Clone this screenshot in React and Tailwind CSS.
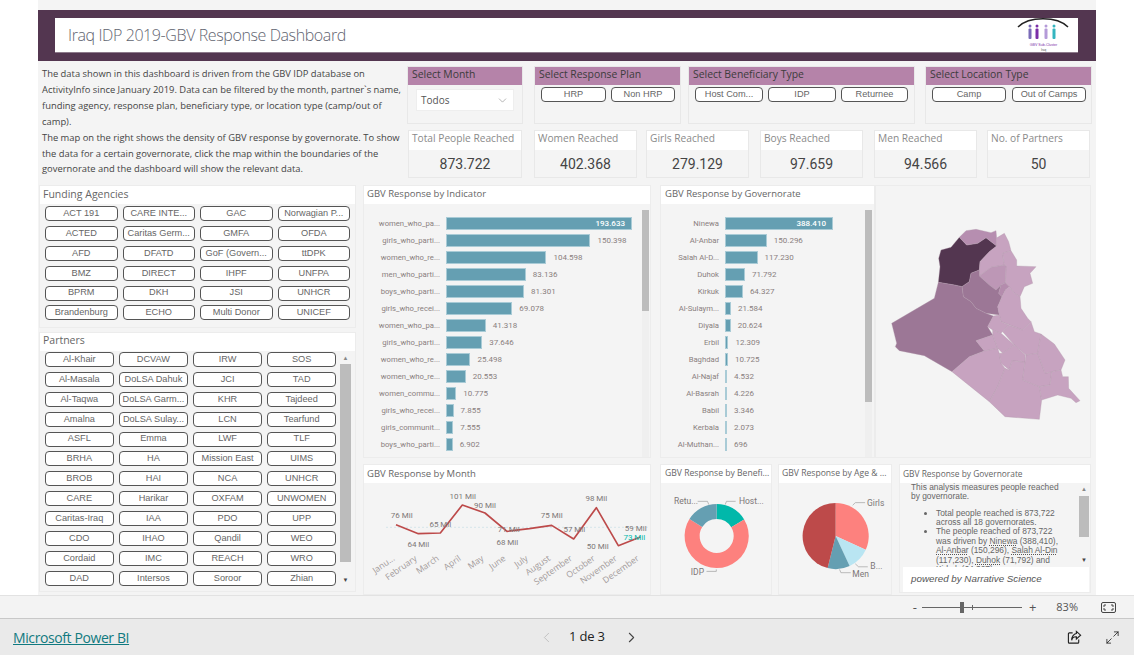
import React from 'react'
import { ChevronDown, ChevronLeft, ChevronRight, Maximize2 } from 'lucide-react'

const funding = [
  ['ACT 191', 'CARE INTE...', 'GAC', 'Norwagian P...'],
  ['ACTED', 'Caritas Germ...', 'GMFA', 'OFDA'],
  ['AFD', 'DFATD', 'GoF (Govern...', 'ttDPK'],
  ['BMZ', 'DIRECT', 'IHPF', 'UNFPA'],
  ['BPRM', 'DKH', 'JSI', 'UNHCR'],
  ['Brandenburg', 'ECHO', 'Multi Donor', 'UNICEF'],
]

const partners = [
  ['Al-Khair', 'DCVAW', 'IRW', 'SOS'],
  ['Al-Masala', 'DoLSA Dahuk', 'JCI', 'TAD'],
  ['Al-Taqwa', 'DoLSA Garm...', 'KHR', 'Tajdeed'],
  ['Amalna', 'DoLSA Sulay...', 'LCN', 'Tearfund'],
  ['ASFL', 'Emma', 'LWF', 'TLF'],
  ['BRHA', 'HA', 'Mission East', 'UIMS'],
  ['BROB', 'HAI', 'NCA', 'UNHCR'],
  ['CARE', 'Harikar', 'OXFAM', 'UNWOMEN'],
  ['Caritas-Iraq', 'IAA', 'PDO', 'UPP'],
  ['CDO', 'IHAO', 'Qandil', 'WEO'],
  ['Cordaid', 'IMC', 'REACH', 'WRO'],
  ['DAD', 'Intersos', 'Soroor', 'Zhian'],
]

const indicators = [
  ['women_who_pa...', 193633], ['girls_who_parti...', 150398], ['women_who_re...', 104598],
  ['men_who_parti...', 83136], ['boys_who_parti...', 81301], ['girls_who_recei...', 69078],
  ['women_who_pa...', 41318], ['girls_who_parti...', 37646], ['women_who_re...', 25498],
  ['women_who_re...', 20553], ['women_commu...', 10775], ['girls_who_recei...', 7855],
  ['girls_communit...', 7555], ['boys_who_parti...', 6902],
]

const governorates = [
  ['Ninewa', 388410], ['Al-Anbar', 150296], ['Salah Al-D...', 117230], ['Duhok', 71792],
  ['Kirkuk', 64327], ['Al-Sulaym...', 21584], ['Diyala', 20624], ['Erbil', 12309],
  ['Baghdad', 10725], ['Al-Najaf', 4532], ['Al-Basrah', 4226], ['Babil', 3346],
  ['Kerbala', 2073], ['Al-Muthan...', 696],
]

const kpis = [
  ['Total People Reached', '873.722', 'w-[114px]', ''],
  ['Women Reached', '402.368', 'w-[103px]', 'ml-[12px]'],
  ['Girls Reached', '279.129', 'w-[103px]', 'ml-[9px]'],
  ['Boys Reached', '97.659', 'w-[103px]', 'ml-[11px]'],
  ['Men Reached', '94.566', 'w-[103px]', 'ml-[11px]'],
  ['No. of Partners', '50', 'w-[103px]', 'ml-[10px]'],
]

const mapRegions = [
  ['#533650', '250,142 272,165 305,160 330,143 362,168 340,185 312,215 310,240 285,250 280,275 258,290 235,285 187,277 192,230 188,205 195,180 225,172'],
  ['#b68eb0', '250,142 270,122 300,118 345,128 360,122 362,145 362,168 330,143 305,160 272,165'],
  ['#c7a3c0', '362,168 360,145 385,130 398,155 405,182 380,190 385,225 345,232 310,258 310,240 312,215 340,185'],
  ['#c7a3c0', '380,190 405,182 422,210 422,228 480,230 462,250 470,280 445,290 432,320 415,310 400,290 388,278 390,228 385,225'],
  ['#bd97b6', '310,258 345,232 385,225 390,228 388,278 375,285 360,300 340,285'],
  ['#9c7796', '285,250 310,240 310,258 340,285 360,300 375,285 368,310 378,320 365,350 370,375 330,370 300,355 285,335 262,320 258,290 280,275'],
  ['#b48cad', '375,285 388,278 400,290 388,300 378,320 368,310'],
  ['#c7a3c0', '388,300 400,290 415,310 432,320 435,355 455,385 465,395 440,420 400,405 375,395 370,375 365,350 378,320'],
  ['#9c7796', '187,277 235,285 258,290 262,320 285,335 300,355 330,370 352,378 335,410 350,435 300,452 325,483 280,500 228,545 145,497 70,482 58,470 62,460 47,400 175,325'],
  ['#c7a3c0', '352,378 370,375 375,395 398,405 375,430 350,420 335,410'],
  ['#c7a3c0', '398,405 440,420 465,395 475,425 495,432 485,490 450,495 415,465 380,425'],
  ['#c7a3c0', '300,452 350,435 365,475 325,483'],
  ['#c7a3c0', '350,420 375,430 415,465 380,490 365,475 350,435'],
  ['#c7a3c0', '228,545 280,500 325,483 365,475 370,490 375,520 387,535 365,590 340,635'],
  ['#c7a3c0', '370,490 380,490 415,465 448,495 447,517 408,512 400,540 375,520'],
  ['#c7a3c0', '340,635 365,590 387,535 400,540 408,512 447,517 440,570 490,590 497,630 490,688 387,680'],
  ['#c7a3c0', '447,517 450,495 485,490 507,550 527,545 522,585 490,590 440,570'],
  ['#c7a3c0', '485,490 495,432 535,462 567,510 555,540 527,545 507,550'],
  ['#c7a3c0', '527,545 555,540 560,560 577,560 578,595 612,632 600,638 585,625 545,615 497,630 490,590 522,585'],
]

const months = ['Janu...', 'February', 'March', 'April', 'May', 'June', 'July', 'August', 'September', 'October', 'November', 'December']
const linePts = [[105, 195], [172, 222], [238, 220], [304, 136], [372, 160], [438, 215], [505, 207], [572, 197], [638, 238], [706, 144], [772, 258], [838, 232]]
const lineLabels = [
  ['76 Mil', 122, 176], ['64 Mil', 172, 263], ['65 Mil', 238, 201], ['101 Mil', 305, 117], ['90 Mil', 372, 144],
  ['71 Mil', 443, 218], ['68 Mil', 439, 255], ['75 Mil', 572, 176], ['57 Mil', 640, 218], ['98 Mil', 706, 125],
  ['50 Mil', 710, 267], ['59 Mil', 824, 215],
]

const fmt = (n) => n.toLocaleString('de-DE')

// start and end in degrees clockwise from the top
const arc = (cx, cy, r, a0, a1, inner = 0) => {
  const pt = (rad, a) => {
    const t = ((a - 90) * Math.PI) / 180
    return `${(cx + rad * Math.cos(t)).toFixed(1)} ${(cy + rad * Math.sin(t)).toFixed(1)}`
  }
  const large = a1 - a0 > 180 ? 1 : 0
  if (!inner) return `M${cx} ${cy} L${pt(r, a0)} A${r} ${r} 0 ${large} 1 ${pt(r, a1)} Z`
  return `M${pt(r, a0)} A${r} ${r} 0 ${large} 1 ${pt(r, a1)} L${pt(inner, a1)} A${inner} ${inner} 0 ${large} 0 ${pt(inner, a0)} Z`
}

const Chiclet = ({ label, className = '' }) => (
  <div className={`h-[15px] flex items-center justify-center bg-white border border-[#555] rounded-[4px] text-[9.2px] leading-none text-[#666] font-['Liberation_Sans',sans-serif] whitespace-nowrap overflow-hidden ${className}`}>
    {label}
  </div>
)

const Title = ({ children, className = '' }) => (
  <div className={`bg-white text-[#666] font-['Open_Sans',sans-serif] whitespace-nowrap overflow-hidden ${className}`}>{children}</div>
)

const Slicer = ({ title, width, className = '', children }) => (
  <div className={`h-[58px] border border-[#e8e8e8] ${width} ${className}`}>
    <div className="h-[18px] bg-[#b583a9] pl-[4px] text-[10.4px] leading-[15px] text-[#3c3c3c] font-['Open_Sans',sans-serif] whitespace-nowrap">{title}</div>
    {children}
  </div>
)

const BarChart = ({ rows, max, maxWidth, labelWidth, scrollHeight, scrollMargin }) => (
  <div className="flex flex-1 min-h-0 pt-[6px]">
    <div className="flex-1 pt-[5px]">
      {rows.map(([label, value], i) => {
        const w = Math.max((value * maxWidth) / max, 1.5)
        return (
          <div key={i} className="flex items-center h-[17px] font-['Roboto',sans-serif] text-[8px] text-[#8a8080]">
            <div className={`text-right pr-[6px] whitespace-nowrap text-[7.7px] ${labelWidth}`}>{label}</div>
            <div className="h-[13px] bg-[#659fb2] border border-[#a9cbd6] flex items-center justify-end" style={{ width: w }}>
              {i === 0 && <span className="pr-[6px] text-white font-medium">{fmt(value)}</span>}
            </div>
            {i > 0 && <span className="pl-[7px]">{fmt(value)}</span>}
          </div>
        )
      })}
    </div>
    <div className={`w-[7px] bg-[#efefef] ${scrollMargin}`}>
      <div className={`bg-[#bcbcbc] ${scrollHeight}`} />
    </div>
  </div>
)

const IraqMap = () => (
  <svg viewBox="0 0 675 801" className="w-[225px] h-[267px] block">
    {mapRegions.map(([fill, points], i) => (
      <polygon key={i} points={points} fill={fill} stroke="#b097aa" strokeWidth="1" strokeLinejoin="round" />
    ))}
  </svg>
)

const LineChart = () => (
  <svg viewBox="9 70 864 336" className="w-[288px] h-[112px] block">
    <line x1="75" y1="203" x2="860" y2="203" stroke="#dbe8ec" strokeWidth="4" strokeDasharray="6 6" />
    <polyline points={linePts.map((p) => p.join(',')).join(' ')} fill="none" stroke="#bd4a4a" strokeWidth="5" strokeLinejoin="round" />
    {lineLabels.map(([t, x, y]) => (
      <text key={t + x} x={x} y={y} textAnchor="middle" fontSize="24" fill="#7d7777" className="font-['Roboto',sans-serif]">{t}</text>
    ))}
    <text x="820" y="242" textAnchor="middle" fontSize="24" fill="#01b8aa" className="font-['Roboto',sans-serif]">73 Mil</text>
    {months.map((m, i) => (
      <text key={m} x={linePts[i][0] - 2} y="300" textAnchor="end" fontSize="26" fill="#a29a9a" transform={`rotate(-35 ${linePts[i][0] - 2} 300)`} className="font-['Open_Sans',sans-serif]">{m}</text>
    ))}
  </svg>
)

const Donut = () => (
  <svg viewBox="16 68 336 336" className="w-[110px] h-[110px] block">
    <path d={arc(186, 230, 98, 0, 59, 52)} fill="#01b8aa" />
    <path d={arc(186, 230, 98, 59, 302, 52)} fill="#fd817e" />
    <path d={arc(186, 230, 98, 302, 360, 52)} fill="#659fb2" />
    <path d="M128 124 H158 L162 134 M212 134 L216 124 H244 M155 338 H185 V332" fill="none" stroke="#999" strokeWidth="2" />
    <g fontSize="26" fill="#7d7777" className="font-['Roboto',sans-serif]">
      <text x="56" y="132">Retu...</text>
      <text x="254" y="132">Host...</text>
      <text x="107" y="348">IDP</text>
    </g>
  </svg>
)

const Pie = () => (
  <svg viewBox="367 68 342 336" className="w-[112px] h-[110px] block">
    <path d={arc(540, 230, 101, 0, 114.5)} fill="#fd817e" />
    <path d={arc(540, 230, 101, 114.5, 155)} fill="#b9e5f2" />
    <path d={arc(540, 230, 101, 155, 194)} fill="#659fb2" />
    <path d={arc(540, 230, 101, 194, 360)} fill="#bd4a4a" />
    <path d="M592 136 L600 128 H630 M600 315 L610 324 H638 M552 332 L556 342 H586" fill="none" stroke="#999" strokeWidth="2" />
    <g fontSize="26" fill="#7d7777" className="font-['Roboto',sans-serif]">
      <text x="636" y="138">Girls</text>
      <text x="646" y="332">B...</text>
      <text x="591" y="354">Men</text>
    </g>
  </svg>
)

const Dotted = ({ children }) => <span className="underline decoration-dotted decoration-[#555]">{children}</span>

const Logo = () => (
  <svg viewBox="0 0 60 34" className="w-[60px] h-[34px] block">
    <path d="M5 9 C16 -2 44 -2 55 9" fill="none" stroke="#222" strokeWidth="1.5" />
    {[[17, '#7a6bb8'], [24, '#7b2fa8'], [33, '#b49ad8'], [41, '#35b5c0']].map(([x, c]) => (
      <g key={x} fill={c}>
        <circle cx={x} cy="8" r="1.5" />
        <rect x={x - 1.5} y="10.5" width="3" height="10.5" rx="1" />
      </g>
    ))}
    <text x="30.5" y="28" textAnchor="middle" fontSize="3.6" fill="#7b2fa8" className="font-['Liberation_Sans',sans-serif]">GBV Sub-Cluster</text>
    <text x="30.5" y="33" textAnchor="middle" fontSize="3" fill="#555" className="font-['Liberation_Sans',sans-serif]">Iraq</text>
  </svg>
)

const App = () => {
  return (
    <div className="w-[1134px] h-[655px] bg-white flex flex-col overflow-hidden">
      {/* Report canvas */}
      <div className="h-[595px] ml-[38px] w-[1058px] bg-[#f4f4f4] pt-[10px]">
        <div className="h-[51px] bg-[#533650] pl-[17px] pt-[8px]">
          <div className="w-[1023px] h-[35px] bg-white flex items-center justify-between pl-[13px] pr-[5px] border-b border-[#8d7a8b]">
            <span className="text-[16px] text-[#5f6470] font-light font-['Open_Sans',sans-serif] tracking-[-0.4px]">Iraq IDP 2019-GBV Response Dashboard</span>
            <Logo />
          </div>
        </div>

        {/* Intro text, slicers and KPI cards */}
        <div className="flex mt-[5px] h-[112px]">
          <div className="w-[369px] pl-[4px] pt-[0px] text-[9.4px] leading-[15.9px] text-[#444] font-['Open_Sans',sans-serif]">
            <p className="whitespace-nowrap">The data shown in this dashboard is driven from the GBV IDP database on</p>
            <p className="whitespace-nowrap">ActivityInfo since January 2019. Data can be filtered by the month, partner`s name,</p>
            <p className="whitespace-nowrap">funding agency, response plan, beneficiary type, or location type (camp/out of</p>
            <p>camp).</p>
            <p className="whitespace-nowrap">The map on the right shows the density of GBV response by governorate. To show</p>
            <p className="whitespace-nowrap">the data for a certain governorate, click the map within the boundaries of the</p>
            <p className="whitespace-nowrap">governorate and the dashboard will show the relevant data.</p>
          </div>
          <div className="flex-1">
            <div className="flex">
              <Slicer title="Select Month" width="w-[116px]">
                <div className="mx-[8px] mt-[4px] h-[22px] bg-white border border-[#eee] flex items-center justify-between px-[4px] text-[10px] text-[#555] font-['Open_Sans',sans-serif]">
                  <span>Todos</span>
                  <ChevronDown size={13} strokeWidth={1} className="text-[#777]" />
                </div>
              </Slicer>
              <Slicer title="Select Response Plan" width="w-[147px]" className="ml-[11px]">
                <div className="flex gap-[5px] pl-[6px] mt-[2px]">
                  <Chiclet label="HRP" className="w-[65px]" />
                  <Chiclet label="Non HRP" className="w-[64px]" />
                </div>
              </Slicer>
              <Slicer title="Select Beneficiary Type" width="w-[227px]" className="ml-[7px]">
                <div className="flex gap-[5px] pl-[6px] mt-[2px]">
                  <Chiclet label="Host Com..." className="w-[68px]" />
                  <Chiclet label="IDP" className="w-[68px]" />
                  <Chiclet label="Returnee" className="w-[67px]" />
                </div>
              </Slicer>
              <Slicer title="Select Location Type" width="w-[167px]" className="ml-[10px]">
                <div className="flex gap-[6px] pl-[6px] mt-[2px]">
                  <Chiclet label="Camp" className="w-[74px]" />
                  <Chiclet label="Out of Camps" className="w-[74px]" />
                </div>
              </Slicer>
            </div>
            <div className="flex mt-[6px] pl-[1px]">
              {kpis.map(([title, value, w, ml]) => (
                <div key={title} className={`h-[48px] border border-[#e8e8e8] ${w} ${ml}`}>
                  <Title className="h-[19px] pl-[3px] text-[10.2px] leading-[15px] !text-[#8a8a8a]">{title}</Title>
                  <div className="text-center text-[14px] leading-[28px] text-[#444] font-['Roboto',sans-serif]">{value}</div>
                </div>
              ))}
            </div>
          </div>
        </div>

        {/* Filters and charts */}
        <div className="flex mt-[7px] pl-[1px]">
          <div className="w-[317px]">
            <div className="h-[143px] border border-[#ececec]">
              <Title className="h-[18px] pl-[3px] text-[10.5px] leading-[16px]">Funding Agencies</Title>
              <div className="grid grid-cols-4 gap-x-[5px] gap-y-[4.9px] pl-[5px] pr-[5px] pt-[2px]">
                {funding.flat().map((f, i) => <Chiclet key={i} label={f} />)}
              </div>
            </div>
            <div className="h-[260px] mt-[4px] border border-[#ececec] flex flex-col">
              <Title className="h-[18px] pl-[3px] text-[10.5px] leading-[14px]">Partners</Title>
              <div className="flex flex-1 pt-[1px]">
                <div className="w-[296px] grid grid-cols-4 gap-x-[5.5px] gap-y-[4.9px] pl-[5px] content-start">
                  {partners.flat().map((p, i) => <Chiclet key={i} label={p} />)}
                </div>
                <div className="ml-[4px] w-[11px] flex flex-col text-[#888]">
                  <div className="h-[12px] text-[6px] leading-[12px] text-center">▲</div>
                  <div className="h-[198px] bg-[#bcbcbc]" />
                  <div className="mt-auto mb-[5px] h-[12px] text-[6px] leading-[12px] text-center text-[#444]">▼</div>
                </div>
              </div>
            </div>
          </div>

          <div className="ml-[7px] w-[728px]">
            <div className="flex h-[273px]">
              <div className="w-[288px] border border-[#ececec] flex flex-col">
                <Title className="h-[18px] pl-[3px] text-[9.5px] leading-[16px]">GBV Response by Indicator</Title>
                <BarChart rows={indicators} max={193633} maxWidth={186} labelWidth="w-[82px]" scrollHeight="h-[101px]" scrollMargin="mr-[1px]" />
              </div>
              <div className="w-[215px] ml-[9px] border border-[#ececec] flex flex-col">
                <Title className="h-[18px] pl-[4px] text-[9.5px] leading-[16px] w-[213px]">GBV Response by Governorate</Title>
                <BarChart rows={governorates} max={388410} maxWidth={108} labelWidth="w-[64px]" scrollHeight="h-[192px]" scrollMargin="mr-[2px]" />
              </div>
              <div className="w-[216px] border border-[#ececec] pt-[4px] overflow-hidden">
                <IraqMap />
              </div>
            </div>
            <div className="flex h-[131px] mt-[6px]">
              <div className="w-[288px] border border-[#ececec]">
                <Title className="h-[18px] pl-[3px] text-[9.5px] leading-[17px]">GBV Response by Month</Title>
                <LineChart />
              </div>
              <div className="w-[112px] ml-[9px] border border-[#ececec]">
                <Title className="h-[18px] pl-[4px] text-[8.6px] leading-[17px]">GBV Response by Benefi...</Title>
                <Donut />
              </div>
              <div className="w-[114px] ml-[6px] border border-[#ececec]">
                <Title className="h-[18px] pl-[3px] text-[8.6px] leading-[17px]">GBV Response by Age & ...</Title>
                <Pie />
              </div>
              <div className="w-[192px] ml-[7px] h-[129px] border border-[#ececec] flex flex-col">
                <Title className="h-[18px] pl-[3px] text-[8.4px] leading-[17px]">GBV Response by Governorate</Title>
                <div className="flex h-[85px] overflow-hidden">
                  <div className="w-[177px] pl-[11px] text-[8.4px] leading-[9.4px] text-[#666] font-['Liberation_Sans',sans-serif]">
                    <p className="mb-[7px]">This analysis measures people reached<br />by governorate.</p>
                    <ul className="list-disc pl-[25px]">
                      <li>Total people reached is 873,722<br />across all 18 governorates.</li>
                      <li>The people reached of 873,722<br />was driven by <Dotted>Ninewa</Dotted> (388,410),<br /><Dotted>Al-Anbar</Dotted> (150,296), <Dotted>Salah Al-Din</Dotted><br />(117,230), <Dotted>Duhok</Dotted> (71,792) and<br />Kirkuk (64,327).</li>
                    </ul>
                  </div>
                  <div className="w-[10px] ml-[2px] flex flex-col text-[#888]">
                    <div className="h-[13px] text-[6px] leading-[13px] text-center">▲</div>
                    <div className="h-[41px] bg-[#bcbcbc]" />
                    <div className="mt-auto h-[13px] text-[6px] leading-[13px] text-center text-[#444]">▼</div>
                  </div>
                </div>
                <div className="h-[25px] bg-white pl-[8px] ml-[3px] mr-[1px] text-[9.8px] leading-[24px] italic text-[#555] font-['Liberation_Sans',sans-serif]">powered by Narrative Science</div>
              </div>
            </div>
          </div>
        </div>
      </div>

      {/* Zoom bar */}
      <div className="h-[23px] bg-[#f3f3f3] border-t border-[#e2e2e2] flex items-center justify-end text-[#555] font-['Open_Sans',sans-serif]">
        <span className="text-[13px] leading-none">-</span>
        <div className="ml-[5px] w-[100px] h-[1px] bg-[#666] flex items-center">
          <div className="ml-[38px] w-[4px] h-[11px] bg-[#666]" />
          <div className="ml-[8px] w-[1px] h-[5px] bg-[#666]" />
        </div>
        <span className="ml-[7px] text-[13px] leading-none">+</span>
        <span className="ml-[20px] text-[11px]">83%</span>
        <svg viewBox="0 0 15 11" className="ml-[23px] mr-[18px] w-[15px] h-[11px]" fill="none" stroke="#444" strokeWidth="1">
          <rect x="0.5" y="0.5" width="14" height="10" rx="1.5" />
          <path d="M3 5V3H5M10 3H12V5M12 6V8H10M5 8H3V6" />
        </svg>
      </div>

      {/* Footer */}
      <div className="flex-1 bg-[#eaeaea] border-t border-[#c8c8c8] flex items-center font-['Open_Sans',sans-serif]">
        <a className="ml-[13px] w-[120px] text-[14px] font-medium text-[#117a80] underline whitespace-nowrap tracking-[-0.4px]">Microsoft Power BI</a>
        <ChevronLeft size={17} strokeWidth={1.2} className="ml-[405px] text-[#bbb]" />
        <span className="ml-[14px] text-[13px] font-medium text-[#222] tracking-[-0.2px] whitespace-nowrap">1 de 3</span>
        <ChevronRight size={17} strokeWidth={1.5} className="ml-[18px] text-[#444]" />
        <svg viewBox="0 0 16 16" className="ml-[427px] w-[15px] h-[15px]" fill="none" stroke="#222" strokeWidth="1.2">
          <path d="M6 3H2.5A1 1 0 0 0 1.5 4V13A1 1 0 0 0 2.5 14H11.5A1 1 0 0 0 12.5 13V10" />
          <path d="M10 1.5L14.5 5.5L10 9.5V7.2C7.5 7 5.5 8.5 5 11C4.8 7.5 7 4.2 10 3.8Z" />
        </svg>
        <Maximize2 size={15} strokeWidth={1.3} className="ml-[23px] text-[#222]" />
      </div>
    </div>
  )
}

export default App
